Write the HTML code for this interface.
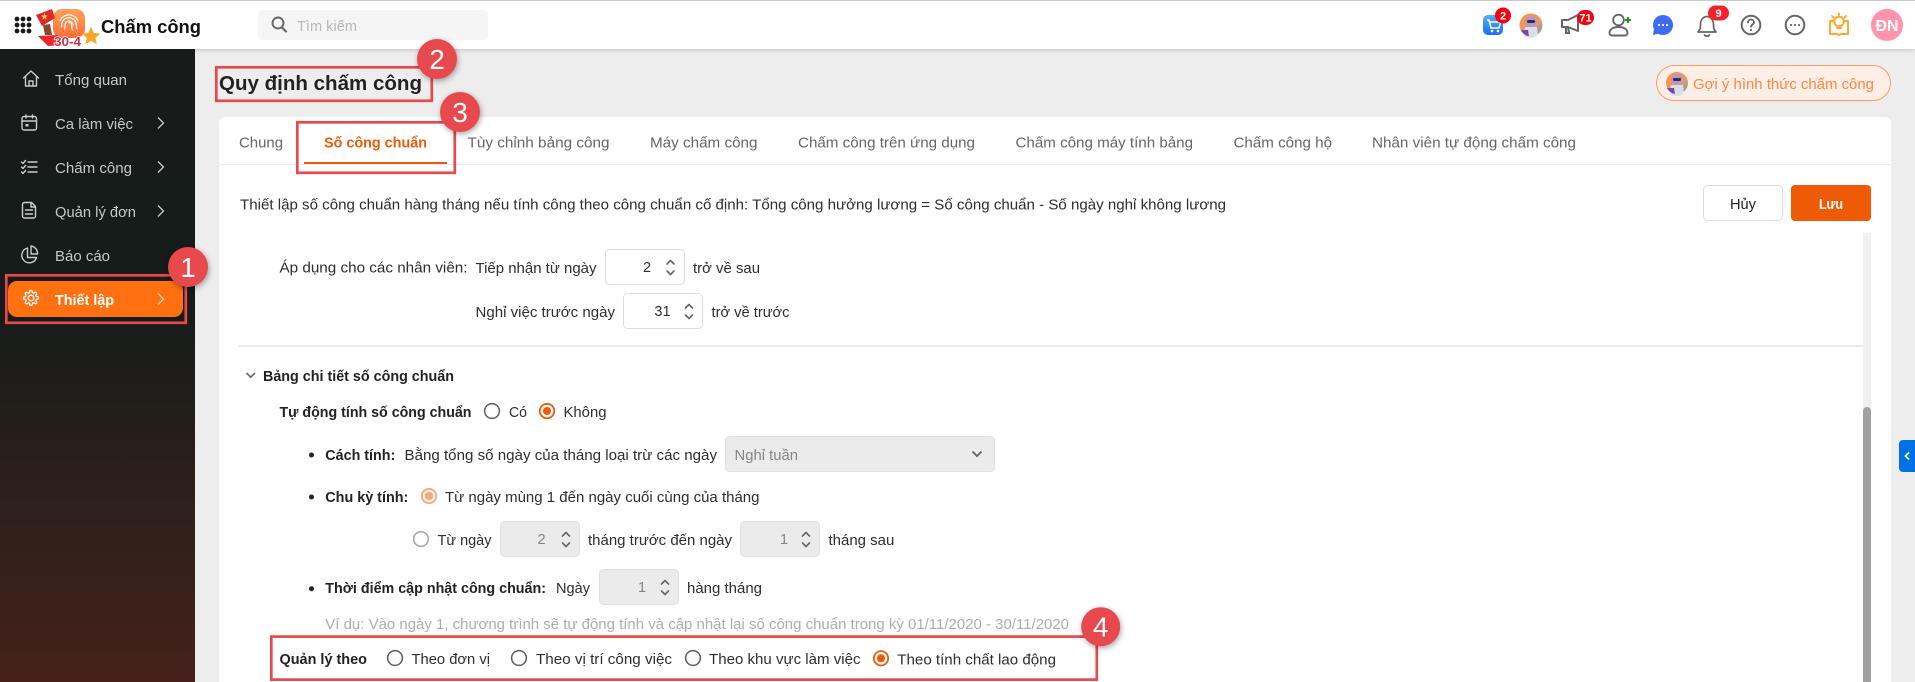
<!DOCTYPE html>
<html lang="vi"><head><meta charset="utf-8"><title>Quy định chấm công</title>
<style>
html,body{margin:0;padding:0;width:1915px;height:682px;overflow:hidden;background:#ededed}
svg{display:block}
text{font-family:"Liberation Sans",sans-serif;font-size:14.5px;fill:#2e2e2e;white-space:pre}
.b{font-weight:700;fill:#222}
.s{fill:#c3c9c9}
.t{fill:#666}
.n{font-size:28px;fill:#fff;text-anchor:middle}
.bd{font-size:11px;font-weight:700;fill:#fff;text-anchor:middle}
.anno{fill:none;stroke:#e8494c;stroke-width:2.7}
.cir{fill:#e8494c;filter:drop-shadow(1px 2px 3px rgba(0,0,0,.35))}
.ic{fill:none;stroke:#c8cdcd;stroke-width:1.4;stroke-linecap:round;stroke-linejoin:round}
.hi{fill:none;stroke:#666;stroke-width:1.8;stroke-linecap:round;stroke-linejoin:round}
.sp{fill:none;stroke:#666;stroke-width:1.6;stroke-linecap:round;stroke-linejoin:round}
.inp{fill:#fff;stroke:#dedede}
.dis{fill:#ebebeb;stroke:#e0e0e0}
.ra{fill:#fff;stroke:#5c5c5c;stroke-width:1.5}
</style></head><body>
<svg xmlns="http://www.w3.org/2000/svg" width="1915" height="682" viewBox="0 0 1915 682">
<defs>
<linearGradient id="side" x1="0" y1="0" x2="0" y2="1"><stop offset="0" stop-color="#171b19"/><stop offset=".42" stop-color="#161c1a"/><stop offset=".72" stop-color="#2e201b"/><stop offset="1" stop-color="#47201a"/></linearGradient>
<linearGradient id="cart" x1="0" y1="0" x2="0" y2="1"><stop offset="0" stop-color="#4fb0fb"/><stop offset="1" stop-color="#1a6ff0"/></linearGradient>
<linearGradient id="logo" x1="0" y1="0" x2="0" y2="1"><stop offset="0" stop-color="#ffa05a"/><stop offset="1" stop-color="#ff6f35"/></linearGradient>
<linearGradient id="av" x1="0" y1="0" x2="1" y2="1"><stop offset="0" stop-color="#ff8f3e"/><stop offset=".6" stop-color="#e89a6a"/><stop offset="1" stop-color="#4fa8b4"/></linearGradient>
<filter id="hs" x="-5%" y="-20%" width="110%" height="160%"><feDropShadow dx="0" dy="1" stdDeviation="2" flood-color="#000" flood-opacity=".18"/></filter>
</defs>

<rect width="1915" height="682" fill="#ededed"/>
<!-- header -->
<rect x="0" y="0" width="1915" height="49" fill="#fff" filter="url(#hs)"/>
<rect x="0" y="0" width="1915" height="1" fill="#c9c9c9"/>
<!-- sidebar -->
<rect x="0" y="49" width="195" height="633" fill="url(#side)"/>

<!-- grid icon -->
<g fill="#1a1a1a"><circle cx="17" cy="19" r="2.4"/><circle cx="23" cy="19" r="2.4"/><circle cx="29" cy="19" r="2.4"/><circle cx="17" cy="25" r="2.4"/><circle cx="23" cy="25" r="2.4"/><circle cx="29" cy="25" r="2.4"/><circle cx="17" cy="31" r="2.4"/><circle cx="23" cy="31" r="2.4"/><circle cx="29" cy="31" r="2.4"/></g>
<!-- logo -->
<rect x="53" y="9" width="32" height="29" rx="9" fill="url(#logo)"/>
<g fill="none" stroke="#fff" stroke-width="1.3" opacity=".92" stroke-linecap="round"><path d="M69 22.500a2.500 2.500 0 0 1 2.500 2.500c0 2 .5 3.500 1 5"/><path d="M64.500 29c.5-1.500.5-2.500.5-4a4 4 0 0 1 8 0"/><path d="M61.500 27c.2-1 .2-1.500.2-2a7.300 7.300 0 0 1 14.600 0c0 1.500.2 3 .6 4"/><path d="M60 20.500a10 10 0 0 1 18 0"/></g>
<path d="M36 15 L52 9 L55 18 L42 26 Z" fill="#e3262a"/>
<path d="M44.500 13l1 2.400 2.300.2-1.800 1.500.6 2.300-2.100-1.200-2 1.300.5-2.400-1.800-1.500 2.400-.2z" fill="#ffd83a"/>
<path d="M43 25 L50 24 L52 35 L45 35 Z" fill="#8a4a2a"/>
<path d="M38 36 L58 35 L62 45 L48 46 Z" fill="#e8262c"/>
<text x="54" y="46" textLength="27" lengthAdjust="spacingAndGlyphs" style="font-size:13px;font-weight:700;fill:#c8324a;stroke:#fff;stroke-width:1.5px;paint-order:stroke">30-4</text>
<path d="M91 27l2.800 6 6.500.6-4.900 4.300 1.500 6.400-5.900-3.400-5.600 3.400 1.300-6.400-4.900-4.300 6.500-.6z" fill="#f9a825"/>
<text x="101" y="33" textLength="100" lengthAdjust="spacingAndGlyphs" class="b" style="font-size:18px;fill:#111">Chấm công</text>

<!-- search -->
<rect x="258" y="10" width="230" height="30" rx="4" fill="#f5f5f5"/>
<circle cx="278" cy="23" r="5.500" fill="none" stroke="#666" stroke-width="1.900"/><path d="M282 27.500L286 31.500" stroke="#666" stroke-width="2.200" stroke-linecap="round"/>
<text x="297" y="31" textLength="60" lengthAdjust="spacingAndGlyphs" style="fill:#b8b8b8">Tìm kiếm</text>

<!-- header right icons -->
<rect x="1483" y="15" width="20" height="20" rx="5" fill="url(#cart)"/>
<path d="M1487 20h2l2 8h8l1.500-6h-10.800" fill="none" stroke="#fff" stroke-width="1.500" stroke-linejoin="round"/><circle cx="1492" cy="31" r="1.300" fill="#fff"/><circle cx="1498" cy="31" r="1.300" fill="#fff"/>
<circle cx="1503" cy="15.500" r="8" fill="#f5000f"/><text x="1503" y="19.500" class="bd">2</text>

<circle cx="1531" cy="25" r="11.500" fill="url(#av)"/><path d="M1524 36l1-9h12l1 8a11.500 11.500 0 0 1-14 1z" fill="#d8dfe8"/><circle cx="1531" cy="21.500" r="5.500" fill="#b595d8"/><rect x="1527" y="20" width="8" height="3" rx="1.200" fill="#2c3440"/><path d="M1521 30a11.500 11.500 0 0 0 8 6.300l-1-6.300z" fill="#7a45b0"/>

<path d="M1562 20h6l10-5v16l-10-4h-6z" fill="none" stroke="#666" stroke-width="2" stroke-linejoin="round"/><path d="M1566 27v6h3l-1-6" fill="none" stroke="#666" stroke-width="2"/>
<rect x="1577" y="10" width="17" height="15" rx="7.500" fill="#f5000f"/><text x="1585.500" y="21.500" class="bd">71</text>

<circle cx="1618.500" cy="20" r="5.300" class="hi" style="stroke-width:1.900"/><path d="M1609.500 33c0-4 4-6 9-6s9 2 9 6c0 1.500-1 2.500-2.500 2.500h-13c-1.500 0-2.500-1-2.500-2.500z" class="hi" style="stroke-width:1.900"/>
<path d="M1628 17v6M1625 20h6" stroke="#1f9a1f" stroke-width="2"/>

<circle cx="1663" cy="25" r="10" fill="#3a6cf4"/><path d="M1654 29l-1 6 6-1.500z" fill="#3a6cf4"/><g fill="#fff"><circle cx="1659" cy="25" r="1.100"/><circle cx="1663" cy="25" r="1.100"/><circle cx="1667" cy="25" r="1.100"/></g>

<path d="M1698 32c2-2 2.500-3 2.500-8 0-4 3-7.500 6.500-7.500s6.500 3.500 6.500 8c0 4.500.5 5.500 2.500 7.500z" class="hi" style="stroke-width:1.700"/><path d="M1704.500 35c1 1.500 4 1.500 5 0" class="hi" style="stroke-width:1.700"/>
<rect x="1708" y="5.500" width="21" height="15" rx="7.500" fill="#f5222d"/><text x="1718.500" y="17" class="bd">9</text>

<circle cx="1751" cy="25" r="9.300" class="hi" style="stroke-width:2"/><path d="M1748 22.500c0-4 6-4 6 0 0 2-3 2-3 4.300" class="hi"/><circle cx="1751" cy="30" r="1.100" fill="#666"/>
<circle cx="1795" cy="25" r="9.300" class="hi" style="stroke-width:2"/><g fill="#666"><circle cx="1791" cy="25" r="1.100"/><circle cx="1795" cy="25" r="1.100"/><circle cx="1799" cy="25" r="1.100"/></g>

<g fill="none" stroke="#ffa726" stroke-width="1.900" stroke-linejoin="round" stroke-linecap="round"><circle cx="1839" cy="21.500" r="4.800"/><path d="M1837 28h4M1839 13.500v1.500M1832 16l1.500 1.500M1846 16l-1.500 1.500"/><path d="M1833.500 21h-3.500v13h7l2 1 2-1h7V21h-3.500"/></g>

<circle cx="1887" cy="25" r="16" fill="#ff94ad"/><text x="1887" y="31" text-anchor="middle" style="font-size:16px;font-weight:700;fill:#fff">ĐN</text>

<!-- sidebar items -->
<g class="ic">
<path d="M23.500 78L31 71l7.500 7M25.500 76.500V86h11v-9.500M29 86v-5h4v5"/>
<rect x="22" y="116.500" width="14.500" height="13.500" rx="2"/><path d="M22 121h14.500M26 115v3M32.500 115v3"/><rect x="25.500" y="124" width="3" height="2.500" fill="#c8cdcd" stroke="none"/>
<path d="M21.500 162l1.500 1.500 2.500-3M21.500 167l1.500 1.500 2.500-3M21.500 172l1.500 1.500 2.500-3M28 162h9M28 167h9M28 172h9"/>
<path d="M24.500 202.500h7l4 4V216a2 2 0 0 1-2 2h-9a2 2 0 0 1-2-2v-11.500a2 2 0 0 1 2-2zM31 202.500V207h4.500M25.500 210h7M25.500 214h7"/>
<path d="M27.500 248a7.500 7.500 0 1 0 9 9.500h-9zM31 246v8h6.500A7.500 7.500 0 0 0 31 246z"/>
</g>
<g fill="none" stroke="#c8cdcd" stroke-width="1.300"><path d="M158 117.500l5.500 5.500-5.500 5.500M158 161.500l5.500 5.500-5.500 5.500M158 205.500l5.500 5.500-5.500 5.500"/></g>
<text x="55" y="85" textLength="72" lengthAdjust="spacingAndGlyphs" class="s">Tổng quan</text>
<text x="55" y="129" textLength="78" lengthAdjust="spacingAndGlyphs" class="s">Ca làm việc</text>
<text x="55" y="173" textLength="77" lengthAdjust="spacingAndGlyphs" class="s">Chấm công</text>
<text x="55" y="217" textLength="81" lengthAdjust="spacingAndGlyphs" class="s">Quản lý đơn</text>
<text x="55" y="261" textLength="55" lengthAdjust="spacingAndGlyphs" class="s">Báo cáo</text>
<rect x="8" y="281" width="175" height="36" rx="9" fill="#ff7010"/>
<circle cx="31" cy="298" r="2.800" fill="none" stroke="#fff" stroke-width="1.400"/>
<path transform="translate(22.800 289.800) scale(.68)" fill="none" stroke="#fff" stroke-width="2" stroke-linejoin="round" d="M19.400 15a1.650 1.650 0 0 0 .33 1.820l.06.06a2 2 0 0 1 0 2.830 2 2 0 0 1-2.830 0l-.06-.06a1.650 1.650 0 0 0-1.820-.33 1.650 1.650 0 0 0-1 1.510V21a2 2 0 0 1-2 2 2 2 0 0 1-2-2v-.09A1.650 1.650 0 0 0 9 19.400a1.650 1.650 0 0 0-1.820.33l-.06.06a2 2 0 0 1-2.830 0 2 2 0 0 1 0-2.830l.06-.06a1.650 1.650 0 0 0 .33-1.820 1.650 1.650 0 0 0-1.510-1H3a2 2 0 0 1-2-2 2 2 0 0 1 2-2h.09A1.650 1.650 0 0 0 4.600 9a1.650 1.650 0 0 0-.33-1.820l-.06-.06a2 2 0 0 1 0-2.830 2 2 0 0 1 2.830 0l.06.06a1.650 1.650 0 0 0 1.820.33H9a1.650 1.650 0 0 0 1-1.510V3a2 2 0 0 1 2-2 2 2 0 0 1 2 2v.09a1.650 1.650 0 0 0 1 1.510 1.650 1.650 0 0 0 1.820-.33l.06-.06a2 2 0 0 1 2.830 0 2 2 0 0 1 0 2.830l-.06.06a1.650 1.650 0 0 0-.33 1.820V9a1.650 1.650 0 0 0 1.510 1H21a2 2 0 0 1 2 2 2 2 0 0 1-2 2h-.09a1.650 1.650 0 0 0-1.510 1z"/>
<text x="55" y="305" textLength="59" lengthAdjust="spacingAndGlyphs" class="b" style="fill:#fff">Thiết lập</text>
<path d="M158 293.500l5.500 5.500-5.500 5.500" fill="none" stroke="#ffd9c0" stroke-width="1.300"/>

<!-- title -->
<text x="219" y="90" textLength="203" lengthAdjust="spacingAndGlyphs" class="b" style="font-size:20px">Quy định chấm công</text>

<!-- suggest pill -->
<rect x="1656.500" y="65.500" width="234" height="35" rx="17.500" fill="#fdeee6" stroke="#ff9d66"/>
<circle cx="1677" cy="83" r="11" fill="url(#av)"/><path d="M1670 94l1-9h12l1 8a11 11 0 0 1-14 1z" fill="#d8dfe8"/><circle cx="1677" cy="79.500" r="5.300" fill="#b595d8"/><rect x="1673" y="78" width="8" height="3" rx="1.200" fill="#2c3440"/><path d="M1667 88a11 11 0 0 0 8 6l-1-6z" fill="#7a45b0"/>
<text x="1693" y="89" textLength="181" lengthAdjust="spacingAndGlyphs" style="fill:#ff8640">Gợi ý hình thức chấm công</text>

<!-- card -->
<path d="M219 682V123a6 6 0 0 1 6-6h1660a6 6 0 0 1 6 6v559z" fill="#fff"/>
<rect x="219" y="164" width="1672" height="1" fill="#e8ebf3"/>
<text x="239" y="147.500" textLength="44" lengthAdjust="spacingAndGlyphs" class="t">Chung</text>
<text x="324" y="147.500" textLength="103" lengthAdjust="spacingAndGlyphs" class="b" style="fill:#ee5a06">Số công chuẩn</text>
<rect x="304" y="162" width="143" height="2" fill="#ee5a06"/>
<text x="467.500" y="147.500" textLength="142" lengthAdjust="spacingAndGlyphs" class="t">Tùy chỉnh bảng công</text>
<text x="650" y="147.500" textLength="107.500" lengthAdjust="spacingAndGlyphs" class="t">Máy chấm công</text>
<text x="798" y="147.500" textLength="177" lengthAdjust="spacingAndGlyphs" class="t">Chấm công trên ứng dụng</text>
<text x="1015.500" y="147.500" textLength="177.500" lengthAdjust="spacingAndGlyphs" class="t">Chấm công máy tính bảng</text>
<text x="1233.500" y="147.500" textLength="98.500" lengthAdjust="spacingAndGlyphs" class="t">Chấm công hộ</text>
<text x="1372" y="147.500" textLength="204" lengthAdjust="spacingAndGlyphs" class="t">Nhân viên tự động chấm công</text>

<text x="240" y="209.500" textLength="986" lengthAdjust="spacingAndGlyphs">Thiết lập số công chuẩn hàng tháng nếu tính công theo công chuẩn cố định: Tổng công hưởng lương = Số công chuẩn - Số ngày nghỉ không lương</text>

<rect x="1703.500" y="185.500" width="79" height="35" rx="4" fill="#fff" stroke="#dcdce8"/>
<text x="1730" y="209" textLength="26" lengthAdjust="spacingAndGlyphs" style="fill:#222">Hủy</text>
<rect x="1791" y="185" width="80" height="36" rx="4" fill="#ee5a06"/>
<text x="1819" y="209" textLength="24" lengthAdjust="spacingAndGlyphs" class="b" style="fill:#fff">Lưu</text>

<!-- scrollbar -->
<rect x="1863" y="233" width="8" height="449" fill="#f0f0f0"/>
<path d="M1863 682V411a4 4 0 0 1 8 0v271z" fill="#a0a0a0"/>
<!-- handle -->
<path d="M1915 440h-12a4 4 0 0 0-4 4v24a4 4 0 0 0 4 4h12z" fill="#0071e3"/>
<path d="M1909 452.500l-3.500 3.500 3.500 3.500" fill="none" stroke="#fff" stroke-width="1.700"/>

<!-- form top -->
<text x="279.500" y="272.500" textLength="188" lengthAdjust="spacingAndGlyphs">Áp dụng cho các nhân viên:</text>
<text x="475.500" y="273" textLength="121" lengthAdjust="spacingAndGlyphs">Tiếp nhận từ ngày</text>
<rect x="605.500" y="249.500" width="79" height="35" rx="4" class="inp"/>
<text x="647" y="272" text-anchor="middle">2</text>
<path class="sp" d="M667 264l3.500-3.500 3.500 3.500M667 271l3.500 3.500 3.500-3.500"/>
<text x="693" y="273" textLength="67" lengthAdjust="spacingAndGlyphs">trở về sau</text>
<text x="475.500" y="317" textLength="139.500" lengthAdjust="spacingAndGlyphs">Nghỉ việc trước ngày</text>
<rect x="623.500" y="293.500" width="79" height="35" rx="4" class="inp"/>
<text x="662.500" y="316" text-anchor="middle">31</text>
<path class="sp" d="M685.500 308l3.500-3.500 3.500 3.500M685.500 315l3.500 3.500 3.500-3.500"/>
<text x="711.500" y="317" textLength="78" lengthAdjust="spacingAndGlyphs">trở về trước</text>
<rect x="239" y="345" width="1624" height="2" fill="#e8ebf0"/>

<path d="M246.500 373l4.200 4.200 4.200-4.200" fill="none" stroke="#666" stroke-width="1.600"/>
<text x="263" y="381" textLength="191" lengthAdjust="spacingAndGlyphs" class="b">Bảng chi tiết số công chuẩn</text>

<text x="279.500" y="417" textLength="192" lengthAdjust="spacingAndGlyphs" class="b">Tự động tính số công chuẩn</text>
<circle cx="492" cy="411" r="7.400" class="ra"/>
<text x="509" y="417" textLength="18" lengthAdjust="spacingAndGlyphs">Có</text>
<circle cx="547" cy="411" r="7.200" fill="#fff" stroke="#ee5a06" stroke-width="1.800"/><circle cx="547" cy="411" r="4" fill="#ee5a06"/>
<text x="563.500" y="417" textLength="43" lengthAdjust="spacingAndGlyphs">Không</text>

<circle cx="311.500" cy="455" r="2.500" fill="#222"/>
<text x="325.300" y="460" textLength="70" lengthAdjust="spacingAndGlyphs" class="b">Cách tính:</text>
<text x="404.500" y="460" textLength="312.500" lengthAdjust="spacingAndGlyphs">Bằng tổng số ngày của tháng loại trừ các ngày</text>
<rect x="725.500" y="436.500" width="269" height="35" rx="4" class="dis"/>
<text x="734.500" y="460" textLength="63.500" lengthAdjust="spacingAndGlyphs" style="fill:#858585">Nghỉ tuần</text>
<path d="M972.500 451.500l4.500 4.500 4.500-4.500" fill="none" stroke="#666" stroke-width="1.900"/>

<circle cx="311.500" cy="497" r="2.500" fill="#222"/>
<text x="325.300" y="502" textLength="83" lengthAdjust="spacingAndGlyphs" class="b">Chu kỳ tính:</text>
<circle cx="429" cy="496" r="7.200" fill="#fdeee6" stroke="#f7a77c" stroke-width="1.800"/><circle cx="429" cy="496" r="4" fill="#f7a77c"/>
<text x="445" y="502" textLength="314.500" lengthAdjust="spacingAndGlyphs">Từ ngày mùng 1 đến ngày cuối cùng của tháng</text>

<circle cx="421" cy="539" r="7.300" fill="#fff" stroke="#aaa" stroke-width="1.600"/>
<text x="437.500" y="545" textLength="54" lengthAdjust="spacingAndGlyphs">Từ ngày</text>
<rect x="500.500" y="521.500" width="79" height="35" rx="4" class="dis"/>
<text x="541.500" y="544" text-anchor="middle" style="fill:#858585">2</text>
<path class="sp" d="M562.500 536l3.500-3.500 3.500 3.500M562.500 543l3.500 3.500 3.500-3.500"/>
<text x="588" y="545" textLength="144" lengthAdjust="spacingAndGlyphs">tháng trước đến ngày</text>
<rect x="740.500" y="521.500" width="79" height="35" rx="4" class="dis"/>
<text x="784" y="544" text-anchor="middle" style="fill:#858585">1</text>
<path class="sp" d="M802.500 536l3.500-3.500 3.500 3.500M802.500 543l3.500 3.500 3.500-3.500"/>
<text x="828.500" y="545" textLength="65.800" lengthAdjust="spacingAndGlyphs">tháng sau</text>

<circle cx="311.500" cy="588.700" r="2.500" fill="#222"/>
<text x="325.300" y="593" textLength="220.700" lengthAdjust="spacingAndGlyphs" class="b">Thời điểm cập nhật công chuẩn:</text>
<text x="556" y="593" textLength="34" lengthAdjust="spacingAndGlyphs">Ngày</text>
<rect x="599.500" y="569.500" width="79" height="35" rx="4" class="dis"/>
<text x="642" y="592" text-anchor="middle" style="fill:#858585">1</text>
<path class="sp" d="M661.500 584l3.500-3.500 3.500 3.500M661.500 591l3.500 3.500 3.500-3.500"/>
<text x="687" y="593" textLength="75" lengthAdjust="spacingAndGlyphs">hàng tháng</text>

<text x="325.300" y="629" textLength="743.700" lengthAdjust="spacingAndGlyphs" style="fill:#adadad">Ví dụ: Vào ngày 1, chương trình sẽ tự động tính và cập nhật lại số công chuẩn trong kỳ 01/11/2020 - 30/11/2020</text>

<text x="279.500" y="664" textLength="87.500" lengthAdjust="spacingAndGlyphs" class="b">Quản lý theo</text>
<circle cx="395" cy="658" r="7.400" class="ra"/>
<text x="411.500" y="664" textLength="78.500" lengthAdjust="spacingAndGlyphs">Theo đơn vị</text>
<circle cx="519" cy="658" r="7.400" class="ra"/>
<text x="536" y="664" textLength="136" lengthAdjust="spacingAndGlyphs">Theo vị trí công việc</text>
<circle cx="693" cy="658" r="7.400" class="ra"/>
<text x="709" y="664" textLength="151.500" lengthAdjust="spacingAndGlyphs">Theo khu vực làm việc</text>
<circle cx="881" cy="658.300" r="7.200" fill="#fff" stroke="#ee5a06" stroke-width="1.800"/><circle cx="881" cy="658.300" r="4" fill="#ee5a06"/>
<text x="897.300" y="664.300" textLength="158.700" lengthAdjust="spacingAndGlyphs">Theo tính chất lao động</text>

<!-- annotations -->
<rect x="6.300" y="275.300" width="179.500" height="47.500" class="anno"/>
<rect x="216.300" y="67.300" width="215.500" height="33.500" class="anno"/>
<rect x="297.300" y="122.300" width="157.500" height="50.500" class="anno"/>
<rect x="271.300" y="636.600" width="825.500" height="43" class="anno"/>
<circle cx="188" cy="267" r="20" class="cir"/><text x="188" y="277" class="n">1</text>
<circle cx="437" cy="59" r="20" class="cir"/><text x="437" y="69" class="n">2</text>
<circle cx="460" cy="112" r="20" class="cir"/><text x="460" y="122" class="n">3</text>
<circle cx="1100.700" cy="626.700" r="19.500" class="cir"/><text x="1100.700" y="636.700" class="n">4</text>
</svg>
</body></html>
